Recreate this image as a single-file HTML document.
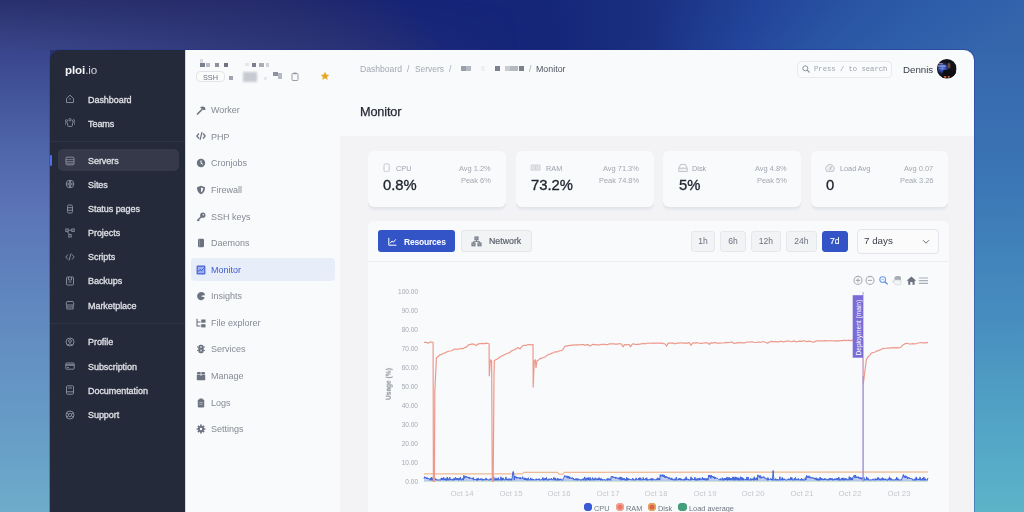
<!DOCTYPE html>
<html><head><meta charset="utf-8">
<style>
*{box-sizing:border-box;margin:0;padding:0}
html,body{width:1024px;height:512px;overflow:hidden}
body{position:relative;font-family:"Liberation Sans",sans-serif;background:#3a5a9e}
.a{position:absolute}
.t{position:absolute;white-space:nowrap;line-height:1}
.bg{position:absolute;left:0;top:0;width:1024px;height:512px;background:conic-gradient(from 270deg at 620px 250px, #2b316f 0deg, #2b316f 19.9deg, #282d6c 28.2deg, #252b6c 35.1deg, #1e2870 42.0deg, #162477 49.8deg, #152679 72.7deg, #1a3080 97.6deg, #22449a 120.0deg, #2a56a5 135.6deg, #3060aa 145.7deg, #3565ab 150.9deg, #3565ab 360deg);}
.bgtl{position:absolute;left:0;top:0;width:520px;height:50px;background:linear-gradient(to bottom, rgba(72,92,165,0) 0px, rgba(72,92,165,0.5) 50px);-webkit-mask-image:linear-gradient(90deg,#000 0%,rgba(0,0,0,0.6) 40%,rgba(0,0,0,0) 100%)}
.bgl{position:absolute;left:0;top:50px;width:50px;height:462px;background:linear-gradient(to bottom,#39458d 0px,#4f66aa 100px,#5a72b5 150px,#6189c0 260px,#68a0c7 400px,#6eaccb 462px)}
.bgr{position:absolute;left:974px;top:50px;width:50px;height:462px;background:linear-gradient(to bottom,#3667ad 0px,#3b76b6 130px,#4890c0 280px,#55a9c7 400px,#5cb4c9 462px)}
.side1{left:50px;top:50px;width:135px;height:470px;background:#252a3a;border-top-left-radius:10px}
.nav{position:absolute;left:87.7px;font-size:9px;font-weight:normal;-webkit-text-stroke:0.3px #dfe1e6;color:#dfe1e6;letter-spacing:-0.05px;white-space:nowrap;line-height:1}
.ico{position:absolute;left:64px;width:12px;height:12px}
.side2{left:185px;top:50px;width:156px;height:470px;background:#f9fafb;border-right:1px solid #ededf0;border-left:1px solid #d5d7dc}
.nav2{position:absolute;left:210.8px;font-size:9px;color:#7c818b;white-space:nowrap;line-height:1}
.ico2{position:absolute;left:195px;width:11px;height:11px}
.hdr{left:340px;top:50px;width:634px;height:86px;background:#f9fafb;border-top-right-radius:10px}
.content{left:340px;top:136px;width:634px;height:376px;background:#f3f3f5}
.card{position:absolute;top:151px;height:56px;background:#f9fafb;border-radius:6px;box-shadow:0 1.5px 0 #e4e5e9, 0 3.5px 0 #e9ebf2}
.clab{position:absolute;font-size:7.3px;color:#9ca3af;white-space:nowrap;line-height:1}
.cval{position:absolute;font-size:14.5px;color:#1f2430;white-space:nowrap;line-height:1;-webkit-text-stroke:0.35px #1f2430}
.cavg{position:absolute;font-size:7.1px;color:#a3a8b2;white-space:nowrap;line-height:1;text-align:right}
.panel{left:368px;top:221px;width:580.5px;height:300px;background:#f9fafb;border-radius:6px}
.tbtn{position:absolute;top:230.7px;height:20.8px;background:#f2f3f5;border:1px solid #e6e7eb;border-radius:3px;font-size:8.5px;color:#6b7280;text-align:center;line-height:19px}
.ylab{position:absolute;font-size:6.5px;color:#a3a8b2;white-space:nowrap;line-height:1;text-align:right;width:30px}
.xlab{position:absolute;font-size:7.8px;color:#c4c7cd;white-space:nowrap;line-height:1}
.leg{position:absolute;font-size:7.4px;color:#707683;white-space:nowrap;line-height:1}
.dot{position:absolute;width:7.5px;height:7.5px;border-radius:50%}
.t,.nav,.nav2,.clab,.cval,.cavg,.tbtn,.ylab,.xlab,.leg{will-change:transform}
</style></head><body>
<div class="bg"></div>
<div class="bgtl"></div>
<div class="bgl"></div>
<div class="bgr"></div>

<div class="a" style="left:49px;top:49px;width:926px;height:480px;border-radius:11px 11px 0 0;background:rgba(32,44,150,0.35)"></div>
<!-- dark sidebar -->
<div class="a side1"></div>
<div class="a" style="left:50px;top:140.5px;width:135px;height:1px;background:#2e3345"></div>
<div class="a" style="left:50px;top:322.5px;width:135px;height:1px;background:#2e3345"></div>
<div class="t" style="left:64.8px;top:64.2px;font-size:11.6px;font-weight:bold;color:#f4f5f7;letter-spacing:-0.1px">ploi<span style="font-weight:normal;color:#d2d4da">.io</span></div>
<div class="a" style="left:57.5px;top:149.2px;width:121px;height:22px;background:#353949;border-radius:5px"></div>
<div class="a" style="left:50px;top:154.5px;width:1.7px;height:11px;background:#4d70e0;border-radius:1px"></div>
<div class="nav" style="top:95.68px">Dashboard</div>
<svg class="a" style="left:65px;top:94.20px" width="10" height="10" viewBox="0 0 10 10" ><path d="M1.5,4.5 L5,1.2 L8.5,4.5 L8.5,8.5 L1.5,8.5 Z" fill="none" stroke="#858a97" stroke-width="1"/><circle cx="5" cy="5" r="0.8" fill="#858a97"/></svg>
<div class="nav" style="top:119.68px">Teams</div>
<svg class="a" style="left:65px;top:118.20px" width="10" height="10" viewBox="0 0 10 10" ><circle cx="1.4" cy="2.8" r="1.1" fill="none" stroke="#858a97" stroke-width="1"/><circle cx="5" cy="1.8" r="1.2" fill="none" stroke="#858a97" stroke-width="1"/><circle cx="8.6" cy="2.8" r="1.1" fill="none" stroke="#858a97" stroke-width="1"/><path d="M2.6,4.6 V7.5 Q2.6,8.4 3.4,8.4 H6.6 Q7.4,8.4 7.4,7.5 V4.6 M0.4,6.6 V5.2 Q0.6,4.4 1.6,4.4 M9.6,6.6 V5.2 Q9.4,4.4 8.4,4.4" fill="none" stroke="#858a97" stroke-width="1"/></svg>
<div class="nav" style="top:156.98px">Servers</div>
<svg class="a" style="left:65px;top:155.50px" width="10" height="10" viewBox="0 0 10 10" ><rect x="1" y="1.2" width="8" height="7.6" rx="1" fill="none" stroke="#858a97" stroke-width="1"/><path d="M1,3.6 H9 M1,5.6 H9 M1,7.2 H9" stroke="#858a97" stroke-width="0.8"/></svg>
<div class="nav" style="top:180.68px">Sites</div>
<svg class="a" style="left:65px;top:179.20px" width="10" height="10" viewBox="0 0 10 10" ><circle cx="5" cy="5" r="3.8" fill="none" stroke="#858a97" stroke-width="1"/><path d="M1.2,5 H8.8 M5,1.2 Q2.8,5 5,8.8 Q7.2,5 5,1.2" fill="none" stroke="#858a97" stroke-width="1"/></svg>
<div class="nav" style="top:204.98px">Status pages</div>
<svg class="a" style="left:65px;top:203.50px" width="10" height="10" viewBox="0 0 10 10" ><rect x="2.5" y="1" width="5" height="8" rx="1.5" fill="none" stroke="#858a97" stroke-width="1"/><path d="M2.5,3.7 H7.5 M2.5,6.3 H7.5" fill="none" stroke="#858a97" stroke-width="1"/></svg>
<div class="nav" style="top:229.28px">Projects</div>
<svg class="a" style="left:65px;top:227.80px" width="10" height="10" viewBox="0 0 10 10" ><rect x="0.8" y="1" width="2.4" height="2.4" fill="none" stroke="#858a97" stroke-width="1"/><rect x="6.8" y="1" width="2.4" height="2.4" fill="none" stroke="#858a97" stroke-width="1"/><rect x="3.8" y="6.6" width="2.4" height="2.4" fill="none" stroke="#858a97" stroke-width="1"/><path d="M3.2,2.2 H6.8 M2,3.4 L4.5,6.6" fill="none" stroke="#858a97" stroke-width="1"/></svg>
<div class="nav" style="top:253.48px">Scripts</div>
<svg class="a" style="left:65px;top:252.00px" width="10" height="10" viewBox="0 0 10 10" ><path d="M3,2.5 L0.8,5 L3,7.5 M7,2.5 L9.2,5 L7,7.5 M6,1.5 L4,8.5" fill="none" stroke="#858a97" stroke-width="1"/></svg>
<div class="nav" style="top:277.48px">Backups</div>
<svg class="a" style="left:65px;top:276.00px" width="10" height="10" viewBox="0 0 10 10" ><rect x="1.5" y="1" width="7" height="8" rx="1" fill="none" stroke="#858a97" stroke-width="1"/><path d="M3.5,1 V4 H6.5 V1 M3.5,6 H6.5" fill="none" stroke="#858a97" stroke-width="1"/></svg>
<div class="nav" style="top:301.68px">Marketplace</div>
<svg class="a" style="left:65px;top:300.20px" width="10" height="10" viewBox="0 0 10 10" ><path d="M1,4 L2,1.5 H8 L9,4 Q9,5 8,5 H2 Q1,5 1,4 Z M1.8,5 V9 H8.2 V5 M1.8,7 H8.2" fill="none" stroke="#858a97" stroke-width="1"/></svg>
<div class="nav" style="top:338.48px">Profile</div>
<svg class="a" style="left:65px;top:337.00px" width="10" height="10" viewBox="0 0 10 10" ><circle cx="5" cy="5" r="4" fill="none" stroke="#858a97" stroke-width="1"/><circle cx="5" cy="4" r="1.4" fill="none" stroke="#858a97" stroke-width="1"/><path d="M2.5,8 Q5,5.5 7.5,8" fill="none" stroke="#858a97" stroke-width="1"/></svg>
<div class="nav" style="top:362.68px">Subscription</div>
<svg class="a" style="left:65px;top:361.20px" width="10" height="10" viewBox="0 0 10 10" ><rect x="0.8" y="2" width="8.4" height="6.2" rx="0.8" fill="none" stroke="#858a97" stroke-width="1"/><path d="M0.8,4 H9.2" stroke="#858a97" stroke-width="1.6"/><path d="M2,6.6 H4" fill="none" stroke="#858a97" stroke-width="1"/></svg>
<div class="nav" style="top:386.78px">Documentation</div>
<svg class="a" style="left:65px;top:385.30px" width="10" height="10" viewBox="0 0 10 10" ><rect x="1.5" y="0.8" width="7" height="8.4" rx="1" fill="none" stroke="#858a97" stroke-width="1"/><path d="M3,3 H7 M1.5,6.8 H8.5" fill="none" stroke="#858a97" stroke-width="1"/></svg>
<div class="nav" style="top:411.18px">Support</div>
<svg class="a" style="left:65px;top:409.70px" width="10" height="10" viewBox="0 0 10 10" ><circle cx="5" cy="5" r="4" fill="none" stroke="#858a97" stroke-width="1"/><circle cx="5" cy="5" r="1.6" fill="none" stroke="#858a97" stroke-width="1"/><path d="M1.6,3 L3.6,4.2 M8.4,3 L6.4,4.2 M1.6,7 L3.6,5.8 M8.4,7 L6.4,5.8" fill="none" stroke="#858a97" stroke-width="1"/></svg>
<!-- second sidebar -->
<div class="a side2"></div>
<div class="a" style="left:200px;top:59px;width:3px;height:5px;background:#d8dbe0;filter:blur(0.7px)"></div>
<div class="a" style="left:200px;top:63px;width:5px;height:4px;background:#7b8090;filter:blur(0.6px)"></div>
<div class="a" style="left:206px;top:63px;width:4px;height:4px;background:#b9bdc6;filter:blur(0.6px)"></div>
<div class="a" style="left:215px;top:63px;width:4px;height:4px;background:#8c909c;filter:blur(0.6px)"></div>
<div class="a" style="left:224px;top:63px;width:4px;height:4px;background:#6f7480;filter:blur(0.6px)"></div>
<div class="a" style="left:245px;top:63px;width:4px;height:3px;background:#e4e6ea;filter:blur(0.6px)"></div>
<div class="a" style="left:252px;top:63px;width:4px;height:4px;background:#7b8090;filter:blur(0.6px)"></div>
<div class="a" style="left:259px;top:63px;width:5px;height:4px;background:#a8adb8;filter:blur(0.6px)"></div>
<div class="a" style="left:266px;top:63px;width:3px;height:4px;background:#d0d3da;filter:blur(0.6px)"></div>
<div class="a" style="left:195.5px;top:70.5px;width:29px;height:11.5px;border:1px solid #e3e5ea;border-radius:4px;background:#fbfbfc"></div>
<div class="t" style="left:203px;top:73.53px;font-size:7.3px;color:#6b7280">SSH</div>
<div class="a" style="left:229px;top:76px;width:4px;height:4px;background:#a0a4ae;filter:blur(0.6px)"></div>
<div class="a" style="left:243px;top:71.5px;width:14px;height:10px;background:#c7cad1;filter:blur(1.0px)"></div>
<div class="a" style="left:264px;top:76.5px;width:3px;height:3px;background:#e6e8ec;filter:blur(0.6px)"></div>
<div class="a" style="left:273px;top:71.5px;width:5px;height:4px;background:#8e93a0;filter:blur(0.6px)"></div>
<div class="a" style="left:278px;top:73px;width:4px;height:6px;background:#b6bac3;filter:blur(0.6px)"></div>
<svg class="a" style="left:290.5px;top:72.00px" width="8" height="9" viewBox="0 0 8 9" ><rect x="1" y="1.5" width="6" height="7" rx="1" fill="none" stroke="#8e93a0" stroke-width="0.9"/><rect x="2.5" y="0.6" width="3" height="1.6" fill="#8e93a0"/></svg>
<svg class="a" style="left:320px;top:71.00px" width="10" height="10" viewBox="0 0 10 10" ><path d="M5,0.8 L6.3,3.6 L9.3,3.9 L7,5.9 L7.7,8.9 L5,7.3 L2.3,8.9 L3,5.9 L0.7,3.9 L3.7,3.6 Z" fill="#e6a727"/></svg>
<div class="a" style="left:190.5px;top:257.5px;width:144px;height:23.8px;background:#e8edfa;border-radius:4px"></div>
<div class="nav2" style="top:106.48px;color:#858a94">Worker</div>
<svg class="a" style="left:195.5px;top:105.00px" width="10" height="10" viewBox="0 0 10 10" ><path d="M1.5,9 L6,4.5" stroke="#6b7280" stroke-width="1.6" stroke-linecap="round"/><path d="M4,2.5 Q6.5,0.5 9,2.5 L9.5,5 L7.5,5 Z" fill="#6b7280"/></svg>
<div class="nav2" style="top:132.78px;color:#858a94">PHP</div>
<svg class="a" style="left:195.5px;top:131.30px" width="10" height="10" viewBox="0 0 10 10" ><path d="M3,2.5 L0.8,5 L3,7.5 M7,2.5 L9.2,5 L7,7.5 M6,1.2 L4,8.8" fill="none" stroke="#6b7280" stroke-width="1.2"/></svg>
<div class="nav2" style="top:159.48px;color:#858a94">Cronjobs</div>
<svg class="a" style="left:195.5px;top:158.00px" width="10" height="10" viewBox="0 0 10 10" ><circle cx="5" cy="5" r="4.2" fill="#6b7280"/><path d="M5,2.5 V5.2 L6.8,6.4" fill="none" stroke="#f9fafb" stroke-width="1"/></svg>
<div class="nav2" style="top:186.48px;color:#858a94">Firewall</div>
<svg class="a" style="left:195.5px;top:185.00px" width="10" height="10" viewBox="0 0 10 10" ><path d="M5,0.8 L9,2.2 Q9,7.5 5,9.3 Q1,7.5 1,2.2 Z" fill="#6b7280"/><path d="M5,2.5 L7.2,3.2 Q7,6.5 5,7.6 Z" fill="#f9fafb"/></svg>
<div class="nav2" style="top:212.98px;color:#858a94">SSH keys</div>
<svg class="a" style="left:195.5px;top:211.50px" width="10" height="10" viewBox="0 0 10 10" ><circle cx="6.8" cy="3.2" r="2.6" fill="#6b7280"/><path d="M5.5,4.5 L1.2,8.8 M2.2,7.8 L3.2,8.8" stroke="#6b7280" stroke-width="1.5"/><circle cx="7.3" cy="2.7" r="0.7" fill="#f9fafb"/></svg>
<div class="nav2" style="top:239.48px;color:#858a94">Daemons</div>
<svg class="a" style="left:195.5px;top:238.00px" width="10" height="10" viewBox="0 0 10 10" ><rect x="2" y="0.8" width="6" height="8.4" rx="1.3" fill="#6b7280"/><path d="M3.5,0.8 V9.2" stroke="#9aa0ab" stroke-width="0.6"/></svg>
<div class="nav2" style="top:265.98px;color:#3d5bd0">Monitor</div>
<svg class="a" style="left:195.5px;top:264.50px" width="10" height="10" viewBox="0 0 10 10" ><rect x="0.6" y="0.6" width="8.8" height="8.8" rx="1.2" fill="#4a64d8"/><rect x="1.8" y="1.8" width="6.4" height="6.4" fill="#9fb0ef"/><path d="M2.4,6.6 L4,4.6 L5.5,5.8 L7.6,3.4" fill="none" stroke="#3a55cf" stroke-width="1"/></svg>
<div class="nav2" style="top:292.48px;color:#858a94">Insights</div>
<svg class="a" style="left:195.5px;top:291.00px" width="10" height="10" viewBox="0 0 10 10" ><path d="M8.6,3.2 A4,4 0 1,0 8.8,6.6 L5,5.2 Z" fill="#6b7280"/><path d="M6,1 A4,4 0 0,1 9.2,4.2 L6,4.2 Z" fill="#6b7280"/></svg>
<div class="nav2" style="top:318.98px;color:#858a94">File explorer</div>
<svg class="a" style="left:195.5px;top:317.50px" width="10" height="10" viewBox="0 0 10 10" ><path d="M1,0.8 V8 H4.5 M1,4 H4.5" fill="none" stroke="#6b7280" stroke-width="1.1"/><rect x="5.2" y="1.5" width="4.3" height="3.2" fill="#6b7280"/><rect x="5.2" y="6.2" width="4.3" height="3.2" fill="#6b7280"/></svg>
<div class="nav2" style="top:345.48px;color:#858a94">Services</div>
<svg class="a" style="left:195.5px;top:344.00px" width="10" height="10" viewBox="0 0 10 10" ><rect x="2.3" y="0.8" width="5.4" height="8.4" rx="2.2" fill="#6b7280"/><path d="M1,3 H2.5 M7.5,3 H9 M1,6.5 H2.5 M7.5,6.5 H9" stroke="#6b7280" stroke-width="1"/><circle cx="5" cy="3" r="0.9" fill="#cfd2d8"/><circle cx="5" cy="6.5" r="0.9" fill="#cfd2d8"/></svg>
<div class="nav2" style="top:372.48px;color:#858a94">Manage</div>
<svg class="a" style="left:195.5px;top:371.00px" width="10" height="10" viewBox="0 0 10 10" ><rect x="0.8" y="3.5" width="8.4" height="5.7" rx="0.6" fill="#6b7280"/><path d="M1.5,1 H8.5 L9.2,3 H0.8 Z" fill="#6b7280"/><path d="M5,1 V5" stroke="#f9fafb" stroke-width="0.7"/></svg>
<div class="nav2" style="top:398.98px;color:#858a94">Logs</div>
<svg class="a" style="left:195.5px;top:397.50px" width="10" height="10" viewBox="0 0 10 10" ><rect x="1.8" y="1.5" width="6.4" height="8" rx="1" fill="#6b7280"/><rect x="3.3" y="0.6" width="3.4" height="1.8" rx="0.5" fill="#6b7280"/><path d="M3.3,4.5 H6.7 M3.3,6.3 H6.7" stroke="#cfd2d8" stroke-width="0.6"/></svg>
<div class="nav2" style="top:425.48px;color:#858a94">Settings</div>
<svg class="a" style="left:195.5px;top:424.00px" width="10" height="10" viewBox="0 0 10 10" ><circle cx="5" cy="5" r="3" fill="#6b7280"/><path d="M5,0.6 V9.4 M0.6,5 H9.4 M1.9,1.9 L8.1,8.1 M8.1,1.9 L1.9,8.1" stroke="#6b7280" stroke-width="1.7"/><circle cx="5" cy="5" r="1.2" fill="#f9fafb"/></svg>
<!-- header -->
<div class="a hdr"></div>
<div class="a content"></div>
<div class="t" style="left:359.7px;top:65.48px;font-size:8.6px;color:#a3a8b2">Dashboard</div>
<div class="t" style="left:407.3px;top:65.48px;font-size:8.6px;color:#a3a8b2">/</div>
<div class="t" style="left:414.7px;top:65.28px;font-size:8.4px;color:#a3a8b2">Servers</div>
<div class="t" style="left:448.8px;top:65.48px;font-size:8.6px;color:#a3a8b2">/</div>
<div class="a" style="left:461px;top:66px;width:5px;height:5px;background:#9aa0ab;filter:blur(0.7px)"></div>
<div class="a" style="left:466px;top:66px;width:5px;height:5px;background:#b4b8c1;filter:blur(0.7px)"></div>
<div class="a" style="left:481px;top:66px;width:4px;height:5px;background:#eef0f2;filter:blur(0.7px)"></div>
<div class="a" style="left:495px;top:66px;width:5px;height:5px;background:#7d8290;filter:blur(0.5px)"></div>
<div class="a" style="left:505px;top:66px;width:5px;height:5px;background:#c9ccd3;filter:blur(0.7px)"></div>
<div class="a" style="left:510px;top:66px;width:8px;height:5px;background:#b5b9c2;filter:blur(0.7px)"></div>
<div class="a" style="left:519px;top:66px;width:5px;height:5px;background:#7b808e;filter:blur(0.5px)"></div>
<div class="t" style="left:528.6px;top:65.48px;font-size:8.6px;color:#a3a8b2">/</div>
<div class="t" style="left:535.5px;top:65.35px;font-size:8.85px;color:#4f5562">Monitor</div>
<div class="t" style="left:360px;top:106.42px;font-size:12.7px;color:#262a35;letter-spacing:-0.15px;-webkit-text-stroke:0.25px #262a35">Monitor</div>
<div class="a" style="left:797.2px;top:60.5px;width:95.3px;height:17.5px;border:1px solid #e8eaee;border-radius:4px;background:#fafbfc"></div>
<svg class="a" style="left:801.5px;top:65.00px" width="8" height="8" viewBox="0 0 8 8" ><circle cx="3.3" cy="3.3" r="2.5" fill="none" stroke="#8e93a0" stroke-width="1"/><path d="M5.2,5.2 L7.5,7.5" stroke="#8e93a0" stroke-width="1.1"/></svg>
<div class="t" style="left:813.6px;top:66.38px;font-size:7.2px;font-family:'Liberation Mono',monospace;color:#9ca3af">Press / to search</div>
<div class="t" style="left:902.8px;top:65.33px;font-size:9.7px;color:#3b404c">Dennis</div>
<svg class="a" style="left:937.3px;top:59.1px" width="19.6" height="19.6" viewBox="0 0 20 20"><defs><clipPath id="av"><circle cx="10" cy="10" r="10"/></clipPath><radialGradient id="avg" cx="0.3" cy="0.48" r="0.36"><stop offset="0" stop-color="#5a7ce8"/><stop offset="0.55" stop-color="#2a3f98"/><stop offset="1" stop-color="#121420" stop-opacity="0"/></radialGradient></defs><g clip-path="url(#av)"><rect width="20" height="20" fill="#121218"/><rect width="20" height="20" fill="url(#avg)"/><rect x="1" y="6.5" width="8" height="1.3" fill="#c8d4ff" opacity="0.7"/><rect x="2" y="4" width="4" height="1.5" fill="#b0c0f5" opacity="0.6"/><rect x="1.5" y="9" width="5" height="1" fill="#a8b8f0" opacity="0.5"/><ellipse cx="12.2" cy="6.8" rx="1.6" ry="3" fill="#6e4a3c"/><path d="M6,12 Q8,10.5 12,11 Q17,11 19,13 L20,20 L5,20 Z" fill="#0e0e12"/><rect x="7" y="17.5" width="2.5" height="1.5" fill="#e07040"/><rect x="11" y="17.5" width="2" height="1.5" fill="#e07040"/></g></svg>
<div class="card" style="left:367.6px;width:138.3px"></div>
<svg class="a" style="left:383.1px;top:162.85px" width="7" height="9.5" viewBox="0 0 7 9.5" ><rect x="1" y="0.8" width="5.2" height="8" rx="1.6" fill="none" stroke="#c3c6cd" stroke-width="1"/></svg>
<div class="clab" style="left:396.0px;top:165.03px;font-size:7.3px;">CPU</div>
<div class="cval" style="left:383.3px;top:178.06px;font-size:14.8px;">0.8%</div>
<div class="cavg" style="right:533.00px;top:165.26px;font-size:7.45px;">Avg 1.2%</div>
<div class="cavg" style="right:533.00px;top:176.56px;font-size:7.45px;">Peak 6%</div>
<div class="card" style="left:515.6px;width:138.3px"></div>
<svg class="a" style="left:530.1px;top:162.85px" width="11" height="9.5" viewBox="0 0 11 9.5" ><rect x="0.5" y="1.6" width="10" height="6.2" rx="0.8" fill="#d6d9de"/><rect x="2" y="3.2" width="7" height="3" fill="#eceef1"/><path d="M3.8,3.4 V6 M5.5,3.4 V6 M7.2,3.4 V6" stroke="#bfc3ca" stroke-width="0.7"/></svg>
<div class="clab" style="left:545.7px;top:165.03px;font-size:7.3px;">RAM</div>
<div class="cval" style="left:531.3000000000001px;top:178.06px;font-size:14.8px;">73.2%</div>
<div class="cavg" style="right:385.00px;top:165.26px;font-size:7.45px;">Avg 71.3%</div>
<div class="cavg" style="right:385.00px;top:176.56px;font-size:7.45px;">Peak 74.8%</div>
<div class="card" style="left:663px;width:138.3px"></div>
<svg class="a" style="left:677.5px;top:162.85px" width="10" height="9.5" viewBox="0 0 10 9.5" ><path d="M0.8,5.2 L2.6,1.4 H7.4 L9.2,5.2 V8.6 H0.8 Z" fill="none" stroke="#bcc0c7" stroke-width="1"/><path d="M0.8,5.2 H9.2" stroke="#bcc0c7" stroke-width="1"/><path d="M2.2,6.9 H5 M6.5,6.9 H7.8" stroke="#d5d8dd" stroke-width="0.8"/></svg>
<div class="clab" style="left:692.2px;top:165.03px;font-size:7.3px;">Disk</div>
<div class="cval" style="left:678.7px;top:178.06px;font-size:14.8px;">5%</div>
<div class="cavg" style="right:237.60px;top:165.26px;font-size:7.45px;">Avg 4.8%</div>
<div class="cavg" style="right:237.60px;top:176.56px;font-size:7.45px;">Peak 5%</div>
<div class="card" style="left:810.6px;width:137.7px"></div>
<svg class="a" style="left:825.0px;top:162.85px" width="10" height="9.5" viewBox="0 0 10 9.5" ><path d="M1.6,8.4 A4.3,4.3 0 1,1 8.4,8.4 Z" fill="#eceef1" stroke="#c3c6cd" stroke-width="1"/><path d="M4.8,6.8 L6.4,3.4" stroke="#9aa0a9" stroke-width="0.8"/></svg>
<div class="clab" style="left:839.7px;top:165.03px;font-size:7.3px;">Load Avg</div>
<div class="cval" style="left:826.3000000000001px;top:178.06px;font-size:14.8px;">0</div>
<div class="cavg" style="right:90.40px;top:165.26px;font-size:7.45px;">Avg 0.07</div>
<div class="cavg" style="right:90.40px;top:176.56px;font-size:7.45px;">Peak 3.26</div>
<div class="a panel"></div>
<div class="a" style="left:377.7px;top:229.8px;width:77.8px;height:22.5px;background:#3254c6;border-radius:3px"></div>
<svg class="a" style="left:388px;top:236.50px" width="9" height="9" viewBox="0 0 9 9" ><path d="M0.8,0.8 V8.2 H8.5" fill="none" stroke="#fff" stroke-width="1"/><path d="M2.2,6.2 L4,4 L5.5,5.2 L7.8,2.3" fill="none" stroke="#fff" stroke-width="1"/></svg>
<div class="t" style="left:404px;top:237.73px;font-size:8.5px;color:#fff;font-weight:bold;letter-spacing:-0.2px">Resources</div>
<div class="a" style="left:460.8px;top:229.8px;width:71.5px;height:22.5px;background:#f2f3f5;border:1px solid #e4e6ea;border-radius:3px"></div>
<svg class="a" style="left:470.5px;top:235.50px" width="11" height="11" viewBox="0 0 11 11" ><rect x="3.9" y="0.9" width="3.2" height="3" fill="#9a9fa8" stroke="#6b7280" stroke-width="0.8"/><rect x="0.9" y="6.9" width="3.2" height="3" fill="#9a9fa8" stroke="#6b7280" stroke-width="0.8"/><rect x="6.9" y="6.9" width="3.2" height="3" fill="#9a9fa8" stroke="#6b7280" stroke-width="0.8"/><path d="M5.5,3.9 V5.5 M2.5,6.9 V5.5 H8.5 V6.9" fill="none" stroke="#6b7280" stroke-width="0.8"/></svg>
<div class="t" style="left:488.9px;top:236.88px;font-size:8.8px;color:#5b616d;-webkit-text-stroke:0.2px #5b616d">Network</div>
<div class="tbtn" style="left:690.8px;width:24.0px">1h</div>
<div class="tbtn" style="left:720px;width:26.2px">6h</div>
<div class="tbtn" style="left:750.9px;width:29.8px">12h</div>
<div class="tbtn" style="left:786px;width:30.8px">24h</div>
<div class="tbtn" style="left:821.6px;width:25.5px;background:#3254c6;border-color:#3254c6;color:#fff;-webkit-text-stroke:0.2px #fff">7d</div>
<div class="a" style="left:856.9px;top:228.5px;width:82px;height:25px;background:#fbfbfc;border:1px solid #e3e5ea;border-radius:4px"></div>
<div class="t" style="left:864.3px;top:236.48px;font-size:9.8px;color:#3b404c">7 days</div>
<svg class="a" style="left:922px;top:238.80px" width="8" height="6" viewBox="0 0 8 6" ><path d="M1,1.2 L4,4.2 L7,1.2" fill="none" stroke="#6b7280" stroke-width="1"/></svg>
<div class="a" style="left:368px;top:261px;width:580.5px;height:1px;background:#eceef1"></div>
<svg class="a" style="left:0;top:0" width="1024" height="512" viewBox="0 0 1024 512">
<path d="M424,481.50 H928" stroke="#eef0f3" stroke-width="0.7" stroke-dasharray="0.7 3.5"/>
<path d="M424,462.52 H928" stroke="#eef0f3" stroke-width="0.7" stroke-dasharray="0.7 3.5"/>
<path d="M424,443.55 H928" stroke="#eef0f3" stroke-width="0.7" stroke-dasharray="0.7 3.5"/>
<path d="M424,424.57 H928" stroke="#eef0f3" stroke-width="0.7" stroke-dasharray="0.7 3.5"/>
<path d="M424,405.60 H928" stroke="#eef0f3" stroke-width="0.7" stroke-dasharray="0.7 3.5"/>
<path d="M424,386.62 H928" stroke="#eef0f3" stroke-width="0.7" stroke-dasharray="0.7 3.5"/>
<path d="M424,367.65 H928" stroke="#eef0f3" stroke-width="0.7" stroke-dasharray="0.7 3.5"/>
<path d="M424,348.68 H928" stroke="#eef0f3" stroke-width="0.7" stroke-dasharray="0.7 3.5"/>
<path d="M424,329.70 H928" stroke="#eef0f3" stroke-width="0.7" stroke-dasharray="0.7 3.5"/>
<path d="M424,310.73 H928" stroke="#eef0f3" stroke-width="0.7" stroke-dasharray="0.7 3.5"/>
<path d="M424,291.75 H928" stroke="#eef0f3" stroke-width="0.7" stroke-dasharray="0.7 3.5"/>
<path d="M462,291.75 V481.5" stroke="#f0f1f4" stroke-width="0.6" stroke-dasharray="0.6 4"/>
<path d="M510.5,291.75 V481.5" stroke="#f0f1f4" stroke-width="0.6" stroke-dasharray="0.6 4"/>
<path d="M559,291.75 V481.5" stroke="#f0f1f4" stroke-width="0.6" stroke-dasharray="0.6 4"/>
<path d="M607.5,291.75 V481.5" stroke="#f0f1f4" stroke-width="0.6" stroke-dasharray="0.6 4"/>
<path d="M656,291.75 V481.5" stroke="#f0f1f4" stroke-width="0.6" stroke-dasharray="0.6 4"/>
<path d="M704.5,291.75 V481.5" stroke="#f0f1f4" stroke-width="0.6" stroke-dasharray="0.6 4"/>
<path d="M753,291.75 V481.5" stroke="#f0f1f4" stroke-width="0.6" stroke-dasharray="0.6 4"/>
<path d="M801.5,291.75 V481.5" stroke="#f0f1f4" stroke-width="0.6" stroke-dasharray="0.6 4"/>
<path d="M850,291.75 V481.5" stroke="#f0f1f4" stroke-width="0.6" stroke-dasharray="0.6 4"/>
<path d="M898.5,291.75 V481.5" stroke="#f0f1f4" stroke-width="0.6" stroke-dasharray="0.6 4"/>
<path d="M424.00,473.90 L522.80,473.90 L523.50,472.30 L557.80,472.30 L558.80,474.20 L563.00,474.20 L564.00,472.30 L928.00,472.00" fill="none" stroke="#ebaa78" stroke-width="1.0"/>
<path d="M424.00,481.30 L928.00,481.30" fill="none" stroke="#9ccdb3" stroke-width="0.6"/>
<path d="M424.00,478.79 L424.70,476.69 L425.49,478.15 L426.08,477.21 L426.59,478.81 L427.15,477.66 L427.61,479.06 L428.07,478.10 L428.54,478.96 L429.33,478.76 L430.05,480.26 L430.55,477.90 L431.28,480.27 L431.79,477.12 L432.48,480.36 L432.95,478.43 L433.43,479.93 L434.10,477.70 L434.85,480.37 L435.60,478.53 L436.24,479.94 L436.79,479.37 L437.32,480.35 L437.83,479.70 L438.39,480.25 L439.10,479.40 L439.62,480.23 L440.07,479.88 L440.78,480.12 L441.29,477.87 L441.78,479.99 L442.38,477.98 L442.97,480.15 L443.66,477.39 L444.40,480.05 L445.08,478.52 L445.54,480.34 L446.02,478.62 L446.53,480.36 L447.27,477.00 L447.82,480.28 L448.37,478.73 L448.98,480.27 L449.76,477.14 L450.30,479.92 L450.86,478.90 L451.44,480.16 L452.07,479.40 L452.52,480.27 L453.00,478.85 L453.46,480.25 L453.99,478.32 L454.70,480.07 L455.40,477.33 L455.97,479.91 L456.47,478.19 L456.94,479.98 L457.70,478.09 L458.43,480.33 L459.07,477.98 L459.80,479.99 L460.45,476.98 L461.14,480.29 L461.61,479.54 L462.09,479.98 L462.74,478.21 L463.43,480.16 L463.88,475.27 L464.51,478.33 L465.22,476.05 L465.93,477.51 L466.72,476.27 L467.41,478.00 L468.08,476.97 L468.79,478.35 L469.25,476.95 L469.94,478.87 L470.57,477.87 L471.33,478.51 L472.11,477.88 L472.90,479.39 L473.42,477.55 L473.92,480.14 L474.71,479.08 L475.33,479.96 L476.03,479.00 L476.65,480.39 L477.10,478.40 L477.66,480.33 L478.23,477.98 L478.68,480.02 L479.42,478.97 L480.12,479.95 L480.67,478.47 L481.47,480.11 L482.05,478.60 L482.52,480.35 L483.26,478.96 L483.80,480.27 L484.42,479.53 L485.21,479.96 L485.94,477.90 L486.72,480.13 L487.42,479.17 L488.03,480.02 L488.71,479.85 L489.48,480.34 L490.10,478.57 L490.81,479.91 L491.35,478.57 L491.99,480.20 L492.50,479.69 L493.27,480.15 L493.79,476.60 L494.40,480.33 L494.92,479.56 L495.40,480.28 L495.94,477.92 L496.65,480.19 L497.25,478.49 L497.82,480.37 L498.36,477.65 L498.99,480.09 L499.74,479.63 L500.28,480.20 L500.89,476.78 L501.64,480.39 L502.10,477.91 L502.72,480.11 L503.17,477.88 L503.91,479.97 L504.70,479.79 L505.20,480.14 L505.89,476.93 L506.57,480.02 L507.18,478.86 L507.90,480.28 L508.67,478.57 L509.17,480.27 L509.84,478.78 L510.31,480.14 L510.97,478.65 L511.63,480.39 L512.18,477.85 L512.86,471.70 L513.48,471.70 L514.26,480.05 L514.82,475.87 L515.42,477.80 L516.19,476.66 L516.79,478.64 L517.52,477.15 L518.31,478.14 L518.84,477.42 L519.62,479.03 L520.15,477.24 L520.65,479.14 L521.44,478.28 L522.03,478.81 L522.74,476.68 L523.25,479.14 L523.71,478.48 L524.28,479.75 L524.83,477.85 L525.32,479.92 L525.84,478.00 L526.58,480.18 L527.05,478.49 L527.82,480.30 L528.40,477.76 L528.99,479.99 L529.71,479.87 L530.18,479.94 L530.72,477.91 L531.29,480.26 L532.07,478.61 L532.77,480.24 L533.32,479.14 L534.09,480.08 L534.87,479.67 L535.49,479.92 L536.27,478.62 L536.87,480.15 L537.65,479.10 L538.36,479.99 L539.08,478.54 L539.64,480.22 L540.36,479.70 L541.08,480.28 L541.55,479.35 L542.11,479.91 L542.87,477.48 L543.35,480.35 L543.97,478.41 L544.51,480.19 L545.17,478.08 L545.92,480.07 L546.41,477.45 L547.06,480.21 L547.77,479.65 L548.31,480.32 L549.06,478.54 L549.65,479.90 L550.28,479.09 L550.96,479.90 L551.45,478.00 L552.19,479.94 L552.65,479.78 L553.17,479.91 L553.82,477.35 L554.58,480.18 L555.12,477.86 L555.61,480.10 L556.27,479.53 L556.77,480.30 L557.31,478.18 L557.83,480.39 L558.40,478.70 L558.96,480.30 L559.68,478.83 L560.17,480.20 L560.81,478.80 L561.32,480.05 L561.91,479.59 L562.70,480.24 L563.35,478.44 L564.10,477.31 L564.62,475.52 L565.38,476.74 L565.97,475.76 L566.43,477.33 L567.20,475.92 L567.82,478.21 L568.46,476.26 L569.19,478.59 L569.68,476.63 L570.15,478.55 L570.92,477.54 L571.64,478.85 L572.39,477.58 L572.98,479.15 L573.47,478.00 L573.94,480.12 L574.65,479.06 L575.14,480.10 L575.79,478.56 L576.38,480.11 L576.98,478.41 L577.59,480.39 L578.25,478.64 L578.97,480.01 L579.58,479.43 L580.07,480.34 L580.67,479.46 L581.30,480.38 L581.97,479.17 L582.69,480.14 L583.16,478.48 L583.94,480.33 L584.69,476.92 L585.43,480.30 L586.22,477.85 L586.99,480.32 L587.72,477.72 L588.29,480.02 L588.80,477.47 L589.53,480.33 L590.16,477.55 L590.70,480.15 L591.26,479.72 L591.77,479.93 L592.46,477.60 L593.18,480.34 L593.82,478.50 L594.57,480.12 L595.22,477.67 L596.02,480.09 L596.61,478.61 L597.41,480.11 L597.98,478.41 L598.49,480.03 L598.96,477.50 L599.64,479.91 L600.29,478.56 L600.74,480.38 L601.24,478.42 L601.87,479.95 L602.37,479.25 L602.83,480.40 L603.40,479.54 L603.93,480.11 L604.59,479.28 L605.20,480.33 L605.98,479.75 L606.46,480.08 L607.22,478.46 L607.76,480.39 L608.44,478.51 L609.11,480.18 L609.89,478.63 L610.66,480.38 L611.29,476.27 L612.02,477.75 L612.79,476.02 L613.42,477.65 L613.93,477.01 L614.69,478.04 L615.15,476.91 L615.86,478.83 L616.34,477.41 L617.06,478.39 L617.75,477.75 L618.48,479.19 L619.16,477.54 L619.61,479.38 L620.32,476.90 L621.08,480.24 L621.61,477.04 L622.31,480.07 L623.10,477.98 L623.79,479.97 L624.40,478.27 L624.95,480.29 L625.62,478.99 L626.12,480.39 L626.61,477.39 L627.11,480.39 L627.57,478.20 L628.27,480.03 L628.74,478.50 L629.48,479.99 L630.24,479.03 L631.01,479.93 L631.50,479.79 L631.96,479.98 L632.69,477.99 L633.36,480.26 L633.85,479.14 L634.37,480.24 L634.97,479.64 L635.52,480.04 L636.10,477.84 L636.72,479.97 L637.39,479.49 L637.99,480.01 L638.56,478.31 L639.09,479.97 L639.57,477.60 L640.02,480.30 L640.74,477.79 L641.36,480.15 L642.09,479.41 L642.66,479.98 L643.20,477.46 L643.73,480.05 L644.35,479.26 L644.83,480.01 L645.52,478.21 L646.10,480.20 L646.69,477.70 L647.45,480.39 L647.97,479.00 L648.59,480.21 L649.35,479.44 L649.99,480.02 L650.70,478.52 L651.27,480.32 L652.01,478.08 L652.52,480.18 L653.24,478.76 L653.85,479.96 L654.39,479.60 L655.08,479.98 L655.59,479.65 L656.15,480.14 L656.66,478.69 L657.45,480.04 L657.93,477.68 L658.52,479.91 L659.25,478.42 L659.77,480.08 L660.25,474.58 L660.84,476.29 L661.47,474.86 L662.13,476.55 L662.90,474.47 L663.49,476.98 L664.25,474.96 L664.94,477.83 L665.50,476.12 L666.22,477.90 L666.76,476.44 L667.36,477.84 L667.87,477.17 L668.49,479.14 L669.13,477.28 L669.76,478.91 L670.40,478.34 L671.08,479.99 L671.71,477.86 L672.23,480.06 L672.82,478.77 L673.61,480.22 L674.08,479.50 L674.54,480.19 L675.14,478.51 L675.68,480.29 L676.39,477.17 L676.91,480.00 L677.50,479.77 L678.22,480.00 L678.90,478.28 L679.42,479.92 L680.00,478.00 L680.73,480.17 L681.29,478.76 L682.03,480.22 L682.78,479.52 L683.31,480.19 L683.83,479.18 L684.38,480.28 L684.93,478.43 L685.61,480.07 L686.18,476.77 L686.65,479.99 L687.42,478.75 L688.16,480.08 L688.62,478.95 L689.30,480.27 L689.78,479.67 L690.50,480.23 L691.01,476.85 L691.52,479.95 L692.18,478.16 L692.94,480.01 L693.69,479.21 L694.32,480.03 L694.92,477.13 L695.47,480.28 L695.97,478.84 L696.58,480.33 L697.20,478.31 L697.95,480.40 L698.70,478.28 L699.38,479.98 L699.96,477.84 L700.44,480.08 L701.11,479.29 L701.80,479.93 L702.37,477.19 L702.99,479.95 L703.45,478.21 L704.02,479.97 L704.59,478.32 L705.31,480.29 L705.92,478.29 L706.66,480.25 L707.39,478.35 L707.94,480.15 L708.73,475.07 L709.29,477.16 L709.96,474.93 L710.72,478.37 L711.28,475.18 L711.94,477.44 L712.71,476.12 L713.40,477.95 L713.93,476.44 L714.41,478.96 L715.14,477.01 L715.87,478.64 L716.41,477.78 L717.01,478.57 L717.48,478.29 L718.22,478.90 L718.82,479.51 L719.48,479.93 L720.27,478.45 L720.76,480.08 L721.28,479.88 L721.74,480.06 L722.23,477.69 L722.98,480.34 L723.44,478.63 L724.15,480.31 L724.61,478.12 L725.36,480.04 L725.84,478.12 L726.45,479.93 L726.99,476.94 L727.45,480.39 L728.12,477.70 L728.68,480.04 L729.19,477.22 L729.66,480.22 L730.31,478.16 L730.81,480.00 L731.39,478.21 L731.99,480.21 L732.71,476.86 L733.36,480.25 L733.83,476.96 L734.57,480.23 L735.23,476.80 L735.89,480.25 L736.49,477.35 L737.18,480.10 L737.95,477.46 L738.40,480.27 L739.00,478.00 L739.76,480.38 L740.50,476.76 L741.15,480.26 L741.90,476.98 L742.67,480.23 L743.15,478.02 L743.67,480.02 L744.44,479.29 L745.13,480.17 L745.65,479.15 L746.38,480.17 L746.86,476.87 L747.39,480.11 L748.15,477.17 L748.77,480.11 L749.29,479.72 L749.98,480.22 L750.63,478.33 L751.13,480.38 L751.93,478.78 L752.60,480.01 L753.11,478.52 L753.74,480.39 L754.20,476.76 L754.82,480.12 L755.36,478.43 L756.14,480.02 L756.88,477.50 L757.34,480.30 L757.86,474.75 L758.61,476.58 L759.38,475.55 L759.87,478.05 L760.52,475.61 L761.11,478.42 L761.90,476.87 L762.44,477.66 L763.20,476.53 L763.90,477.95 L764.37,476.86 L765.06,478.66 L765.77,477.95 L766.27,479.28 L766.80,478.46 L767.50,480.30 L767.96,477.54 L768.74,479.97 L769.50,479.45 L769.98,479.94 L770.73,478.40 L771.30,479.99 L771.92,478.74 L772.44,480.37 L773.14,470.50 L773.90,480.27 L774.49,479.63 L775.24,480.23 L775.74,478.55 L776.51,480.34 L777.30,479.00 L777.99,480.29 L778.60,479.64 L779.12,480.22 L779.92,476.69 L780.41,480.26 L781.17,479.17 L781.72,479.91 L782.18,477.39 L782.68,480.40 L783.42,478.70 L784.02,479.94 L784.55,478.75 L785.06,480.01 L785.76,479.82 L786.24,480.10 L786.86,479.69 L787.53,480.05 L788.26,478.68 L788.73,480.03 L789.33,478.84 L790.06,480.23 L790.81,477.21 L791.26,479.94 L791.88,477.48 L792.39,479.98 L792.97,479.53 L793.63,480.40 L794.26,478.33 L794.75,480.04 L795.49,477.41 L796.19,480.21 L796.90,479.03 L797.69,480.15 L798.31,478.31 L798.77,479.92 L799.30,479.80 L799.84,479.99 L800.30,479.20 L800.82,480.39 L801.48,478.32 L802.17,480.35 L802.93,478.85 L803.42,480.15 L804.05,479.78 L804.64,480.33 L805.29,477.62 L805.94,480.03 L806.45,475.47 L807.05,477.56 L807.64,475.93 L808.17,477.92 L808.97,475.78 L809.71,478.10 L810.50,476.77 L811.17,478.37 L811.64,477.53 L812.14,478.30 L812.92,477.19 L813.68,478.77 L814.22,477.93 L815.00,479.34 L815.63,477.85 L816.18,480.08 L816.68,477.85 L817.31,480.27 L817.92,478.74 L818.41,480.33 L818.97,478.58 L819.50,480.36 L820.14,477.07 L820.79,480.07 L821.31,478.39 L821.95,480.09 L822.57,478.63 L823.10,480.14 L823.68,478.89 L824.25,479.97 L824.79,478.36 L825.34,479.91 L825.89,478.73 L826.36,479.96 L826.97,479.51 L827.57,480.03 L828.06,478.94 L828.77,480.32 L829.34,478.16 L830.00,479.98 L830.74,478.09 L831.45,480.02 L832.07,478.12 L832.84,480.34 L833.59,479.13 L834.25,480.15 L835.03,478.44 L835.76,479.96 L836.42,478.40 L837.03,480.04 L837.58,478.29 L838.17,480.24 L838.89,477.20 L839.50,480.31 L840.05,479.32 L840.71,480.36 L841.48,477.97 L842.22,479.92 L842.74,477.90 L843.20,480.38 L843.85,477.89 L844.57,480.13 L845.37,478.33 L846.06,480.21 L846.63,478.51 L847.41,480.06 L848.05,479.53 L848.64,480.12 L849.29,476.64 L849.91,480.18 L850.58,477.39 L851.21,479.99 L851.72,477.82 L852.46,480.14 L852.95,476.97 L853.69,476.57 L854.28,475.17 L854.91,478.10 L855.58,475.00 L856.25,477.97 L856.98,476.78 L857.54,477.99 L858.22,476.59 L858.76,478.33 L859.56,477.49 L860.07,479.06 L860.55,477.24 L861.22,479.28 L861.67,477.77 L862.25,479.28 L862.73,477.10 L863.34,480.21 L863.81,477.10 L864.59,480.18 L865.26,479.86 L866.04,479.97 L866.60,476.82 L867.15,480.10 L867.94,477.86 L868.47,480.21 L869.17,479.59 L869.93,480.16 L870.66,479.73 L871.23,480.31 L872.02,479.34 L872.51,480.13 L873.10,478.83 L873.59,479.99 L874.17,479.71 L874.71,480.28 L875.18,478.52 L875.68,480.05 L876.16,479.06 L876.66,480.18 L877.40,477.61 L877.97,480.04 L878.56,477.55 L879.34,480.15 L879.87,478.76 L880.57,480.27 L881.33,478.50 L881.87,480.10 L882.39,477.65 L883.02,480.13 L883.57,478.48 L884.25,480.12 L884.80,478.81 L885.32,479.97 L885.88,478.78 L886.53,480.22 L887.15,479.83 L887.71,480.29 L888.20,478.59 L888.80,479.95 L889.52,476.77 L890.01,480.26 L890.47,478.17 L891.05,480.19 L891.73,478.63 L892.47,480.22 L893.14,479.78 L893.91,480.03 L894.61,479.86 L895.12,480.30 L895.67,478.86 L896.23,480.08 L896.75,477.12 L897.45,480.27 L898.05,478.52 L898.50,479.98 L899.22,479.86 L899.97,480.10 L900.44,479.79 L901.16,480.29 L901.93,478.81 L902.63,476.82 L903.37,474.56 L903.97,477.24 L904.67,475.76 L905.14,477.93 L905.77,475.79 L906.24,477.61 L906.78,476.33 L907.42,478.85 L908.00,477.12 L908.49,478.33 L909.03,477.36 L909.80,478.99 L910.56,478.00 L911.30,478.91 L911.81,478.24 L912.53,479.98 L913.02,479.54 L913.54,480.37 L914.09,479.20 L914.69,480.34 L915.26,478.50 L915.77,480.36 L916.22,476.90 L916.70,480.04 L917.49,478.78 L918.11,480.18 L918.63,478.89 L919.40,480.08 L920.07,477.02 L920.61,480.28 L921.11,479.13 L921.85,480.25 L922.37,477.97 L923.14,480.32 L923.87,476.91 L924.43,480.31 L925.17,478.49 L925.81,480.22 L926.55,479.86 L927.20,480.09 L927.94,477.90 L928,480.9 L424,480.9 Z" fill="#3a5fd8" fill-opacity="0.3" stroke="none"/>
<path d="M424.00,478.79 L424.70,476.69 L425.49,478.15 L426.08,477.21 L426.59,478.81 L427.15,477.66 L427.61,479.06 L428.07,478.10 L428.54,478.96 L429.33,478.76 L430.05,480.26 L430.55,477.90 L431.28,480.27 L431.79,477.12 L432.48,480.36 L432.95,478.43 L433.43,479.93 L434.10,477.70 L434.85,480.37 L435.60,478.53 L436.24,479.94 L436.79,479.37 L437.32,480.35 L437.83,479.70 L438.39,480.25 L439.10,479.40 L439.62,480.23 L440.07,479.88 L440.78,480.12 L441.29,477.87 L441.78,479.99 L442.38,477.98 L442.97,480.15 L443.66,477.39 L444.40,480.05 L445.08,478.52 L445.54,480.34 L446.02,478.62 L446.53,480.36 L447.27,477.00 L447.82,480.28 L448.37,478.73 L448.98,480.27 L449.76,477.14 L450.30,479.92 L450.86,478.90 L451.44,480.16 L452.07,479.40 L452.52,480.27 L453.00,478.85 L453.46,480.25 L453.99,478.32 L454.70,480.07 L455.40,477.33 L455.97,479.91 L456.47,478.19 L456.94,479.98 L457.70,478.09 L458.43,480.33 L459.07,477.98 L459.80,479.99 L460.45,476.98 L461.14,480.29 L461.61,479.54 L462.09,479.98 L462.74,478.21 L463.43,480.16 L463.88,475.27 L464.51,478.33 L465.22,476.05 L465.93,477.51 L466.72,476.27 L467.41,478.00 L468.08,476.97 L468.79,478.35 L469.25,476.95 L469.94,478.87 L470.57,477.87 L471.33,478.51 L472.11,477.88 L472.90,479.39 L473.42,477.55 L473.92,480.14 L474.71,479.08 L475.33,479.96 L476.03,479.00 L476.65,480.39 L477.10,478.40 L477.66,480.33 L478.23,477.98 L478.68,480.02 L479.42,478.97 L480.12,479.95 L480.67,478.47 L481.47,480.11 L482.05,478.60 L482.52,480.35 L483.26,478.96 L483.80,480.27 L484.42,479.53 L485.21,479.96 L485.94,477.90 L486.72,480.13 L487.42,479.17 L488.03,480.02 L488.71,479.85 L489.48,480.34 L490.10,478.57 L490.81,479.91 L491.35,478.57 L491.99,480.20 L492.50,479.69 L493.27,480.15 L493.79,476.60 L494.40,480.33 L494.92,479.56 L495.40,480.28 L495.94,477.92 L496.65,480.19 L497.25,478.49 L497.82,480.37 L498.36,477.65 L498.99,480.09 L499.74,479.63 L500.28,480.20 L500.89,476.78 L501.64,480.39 L502.10,477.91 L502.72,480.11 L503.17,477.88 L503.91,479.97 L504.70,479.79 L505.20,480.14 L505.89,476.93 L506.57,480.02 L507.18,478.86 L507.90,480.28 L508.67,478.57 L509.17,480.27 L509.84,478.78 L510.31,480.14 L510.97,478.65 L511.63,480.39 L512.18,477.85 L512.86,471.70 L513.48,471.70 L514.26,480.05 L514.82,475.87 L515.42,477.80 L516.19,476.66 L516.79,478.64 L517.52,477.15 L518.31,478.14 L518.84,477.42 L519.62,479.03 L520.15,477.24 L520.65,479.14 L521.44,478.28 L522.03,478.81 L522.74,476.68 L523.25,479.14 L523.71,478.48 L524.28,479.75 L524.83,477.85 L525.32,479.92 L525.84,478.00 L526.58,480.18 L527.05,478.49 L527.82,480.30 L528.40,477.76 L528.99,479.99 L529.71,479.87 L530.18,479.94 L530.72,477.91 L531.29,480.26 L532.07,478.61 L532.77,480.24 L533.32,479.14 L534.09,480.08 L534.87,479.67 L535.49,479.92 L536.27,478.62 L536.87,480.15 L537.65,479.10 L538.36,479.99 L539.08,478.54 L539.64,480.22 L540.36,479.70 L541.08,480.28 L541.55,479.35 L542.11,479.91 L542.87,477.48 L543.35,480.35 L543.97,478.41 L544.51,480.19 L545.17,478.08 L545.92,480.07 L546.41,477.45 L547.06,480.21 L547.77,479.65 L548.31,480.32 L549.06,478.54 L549.65,479.90 L550.28,479.09 L550.96,479.90 L551.45,478.00 L552.19,479.94 L552.65,479.78 L553.17,479.91 L553.82,477.35 L554.58,480.18 L555.12,477.86 L555.61,480.10 L556.27,479.53 L556.77,480.30 L557.31,478.18 L557.83,480.39 L558.40,478.70 L558.96,480.30 L559.68,478.83 L560.17,480.20 L560.81,478.80 L561.32,480.05 L561.91,479.59 L562.70,480.24 L563.35,478.44 L564.10,477.31 L564.62,475.52 L565.38,476.74 L565.97,475.76 L566.43,477.33 L567.20,475.92 L567.82,478.21 L568.46,476.26 L569.19,478.59 L569.68,476.63 L570.15,478.55 L570.92,477.54 L571.64,478.85 L572.39,477.58 L572.98,479.15 L573.47,478.00 L573.94,480.12 L574.65,479.06 L575.14,480.10 L575.79,478.56 L576.38,480.11 L576.98,478.41 L577.59,480.39 L578.25,478.64 L578.97,480.01 L579.58,479.43 L580.07,480.34 L580.67,479.46 L581.30,480.38 L581.97,479.17 L582.69,480.14 L583.16,478.48 L583.94,480.33 L584.69,476.92 L585.43,480.30 L586.22,477.85 L586.99,480.32 L587.72,477.72 L588.29,480.02 L588.80,477.47 L589.53,480.33 L590.16,477.55 L590.70,480.15 L591.26,479.72 L591.77,479.93 L592.46,477.60 L593.18,480.34 L593.82,478.50 L594.57,480.12 L595.22,477.67 L596.02,480.09 L596.61,478.61 L597.41,480.11 L597.98,478.41 L598.49,480.03 L598.96,477.50 L599.64,479.91 L600.29,478.56 L600.74,480.38 L601.24,478.42 L601.87,479.95 L602.37,479.25 L602.83,480.40 L603.40,479.54 L603.93,480.11 L604.59,479.28 L605.20,480.33 L605.98,479.75 L606.46,480.08 L607.22,478.46 L607.76,480.39 L608.44,478.51 L609.11,480.18 L609.89,478.63 L610.66,480.38 L611.29,476.27 L612.02,477.75 L612.79,476.02 L613.42,477.65 L613.93,477.01 L614.69,478.04 L615.15,476.91 L615.86,478.83 L616.34,477.41 L617.06,478.39 L617.75,477.75 L618.48,479.19 L619.16,477.54 L619.61,479.38 L620.32,476.90 L621.08,480.24 L621.61,477.04 L622.31,480.07 L623.10,477.98 L623.79,479.97 L624.40,478.27 L624.95,480.29 L625.62,478.99 L626.12,480.39 L626.61,477.39 L627.11,480.39 L627.57,478.20 L628.27,480.03 L628.74,478.50 L629.48,479.99 L630.24,479.03 L631.01,479.93 L631.50,479.79 L631.96,479.98 L632.69,477.99 L633.36,480.26 L633.85,479.14 L634.37,480.24 L634.97,479.64 L635.52,480.04 L636.10,477.84 L636.72,479.97 L637.39,479.49 L637.99,480.01 L638.56,478.31 L639.09,479.97 L639.57,477.60 L640.02,480.30 L640.74,477.79 L641.36,480.15 L642.09,479.41 L642.66,479.98 L643.20,477.46 L643.73,480.05 L644.35,479.26 L644.83,480.01 L645.52,478.21 L646.10,480.20 L646.69,477.70 L647.45,480.39 L647.97,479.00 L648.59,480.21 L649.35,479.44 L649.99,480.02 L650.70,478.52 L651.27,480.32 L652.01,478.08 L652.52,480.18 L653.24,478.76 L653.85,479.96 L654.39,479.60 L655.08,479.98 L655.59,479.65 L656.15,480.14 L656.66,478.69 L657.45,480.04 L657.93,477.68 L658.52,479.91 L659.25,478.42 L659.77,480.08 L660.25,474.58 L660.84,476.29 L661.47,474.86 L662.13,476.55 L662.90,474.47 L663.49,476.98 L664.25,474.96 L664.94,477.83 L665.50,476.12 L666.22,477.90 L666.76,476.44 L667.36,477.84 L667.87,477.17 L668.49,479.14 L669.13,477.28 L669.76,478.91 L670.40,478.34 L671.08,479.99 L671.71,477.86 L672.23,480.06 L672.82,478.77 L673.61,480.22 L674.08,479.50 L674.54,480.19 L675.14,478.51 L675.68,480.29 L676.39,477.17 L676.91,480.00 L677.50,479.77 L678.22,480.00 L678.90,478.28 L679.42,479.92 L680.00,478.00 L680.73,480.17 L681.29,478.76 L682.03,480.22 L682.78,479.52 L683.31,480.19 L683.83,479.18 L684.38,480.28 L684.93,478.43 L685.61,480.07 L686.18,476.77 L686.65,479.99 L687.42,478.75 L688.16,480.08 L688.62,478.95 L689.30,480.27 L689.78,479.67 L690.50,480.23 L691.01,476.85 L691.52,479.95 L692.18,478.16 L692.94,480.01 L693.69,479.21 L694.32,480.03 L694.92,477.13 L695.47,480.28 L695.97,478.84 L696.58,480.33 L697.20,478.31 L697.95,480.40 L698.70,478.28 L699.38,479.98 L699.96,477.84 L700.44,480.08 L701.11,479.29 L701.80,479.93 L702.37,477.19 L702.99,479.95 L703.45,478.21 L704.02,479.97 L704.59,478.32 L705.31,480.29 L705.92,478.29 L706.66,480.25 L707.39,478.35 L707.94,480.15 L708.73,475.07 L709.29,477.16 L709.96,474.93 L710.72,478.37 L711.28,475.18 L711.94,477.44 L712.71,476.12 L713.40,477.95 L713.93,476.44 L714.41,478.96 L715.14,477.01 L715.87,478.64 L716.41,477.78 L717.01,478.57 L717.48,478.29 L718.22,478.90 L718.82,479.51 L719.48,479.93 L720.27,478.45 L720.76,480.08 L721.28,479.88 L721.74,480.06 L722.23,477.69 L722.98,480.34 L723.44,478.63 L724.15,480.31 L724.61,478.12 L725.36,480.04 L725.84,478.12 L726.45,479.93 L726.99,476.94 L727.45,480.39 L728.12,477.70 L728.68,480.04 L729.19,477.22 L729.66,480.22 L730.31,478.16 L730.81,480.00 L731.39,478.21 L731.99,480.21 L732.71,476.86 L733.36,480.25 L733.83,476.96 L734.57,480.23 L735.23,476.80 L735.89,480.25 L736.49,477.35 L737.18,480.10 L737.95,477.46 L738.40,480.27 L739.00,478.00 L739.76,480.38 L740.50,476.76 L741.15,480.26 L741.90,476.98 L742.67,480.23 L743.15,478.02 L743.67,480.02 L744.44,479.29 L745.13,480.17 L745.65,479.15 L746.38,480.17 L746.86,476.87 L747.39,480.11 L748.15,477.17 L748.77,480.11 L749.29,479.72 L749.98,480.22 L750.63,478.33 L751.13,480.38 L751.93,478.78 L752.60,480.01 L753.11,478.52 L753.74,480.39 L754.20,476.76 L754.82,480.12 L755.36,478.43 L756.14,480.02 L756.88,477.50 L757.34,480.30 L757.86,474.75 L758.61,476.58 L759.38,475.55 L759.87,478.05 L760.52,475.61 L761.11,478.42 L761.90,476.87 L762.44,477.66 L763.20,476.53 L763.90,477.95 L764.37,476.86 L765.06,478.66 L765.77,477.95 L766.27,479.28 L766.80,478.46 L767.50,480.30 L767.96,477.54 L768.74,479.97 L769.50,479.45 L769.98,479.94 L770.73,478.40 L771.30,479.99 L771.92,478.74 L772.44,480.37 L773.14,470.50 L773.90,480.27 L774.49,479.63 L775.24,480.23 L775.74,478.55 L776.51,480.34 L777.30,479.00 L777.99,480.29 L778.60,479.64 L779.12,480.22 L779.92,476.69 L780.41,480.26 L781.17,479.17 L781.72,479.91 L782.18,477.39 L782.68,480.40 L783.42,478.70 L784.02,479.94 L784.55,478.75 L785.06,480.01 L785.76,479.82 L786.24,480.10 L786.86,479.69 L787.53,480.05 L788.26,478.68 L788.73,480.03 L789.33,478.84 L790.06,480.23 L790.81,477.21 L791.26,479.94 L791.88,477.48 L792.39,479.98 L792.97,479.53 L793.63,480.40 L794.26,478.33 L794.75,480.04 L795.49,477.41 L796.19,480.21 L796.90,479.03 L797.69,480.15 L798.31,478.31 L798.77,479.92 L799.30,479.80 L799.84,479.99 L800.30,479.20 L800.82,480.39 L801.48,478.32 L802.17,480.35 L802.93,478.85 L803.42,480.15 L804.05,479.78 L804.64,480.33 L805.29,477.62 L805.94,480.03 L806.45,475.47 L807.05,477.56 L807.64,475.93 L808.17,477.92 L808.97,475.78 L809.71,478.10 L810.50,476.77 L811.17,478.37 L811.64,477.53 L812.14,478.30 L812.92,477.19 L813.68,478.77 L814.22,477.93 L815.00,479.34 L815.63,477.85 L816.18,480.08 L816.68,477.85 L817.31,480.27 L817.92,478.74 L818.41,480.33 L818.97,478.58 L819.50,480.36 L820.14,477.07 L820.79,480.07 L821.31,478.39 L821.95,480.09 L822.57,478.63 L823.10,480.14 L823.68,478.89 L824.25,479.97 L824.79,478.36 L825.34,479.91 L825.89,478.73 L826.36,479.96 L826.97,479.51 L827.57,480.03 L828.06,478.94 L828.77,480.32 L829.34,478.16 L830.00,479.98 L830.74,478.09 L831.45,480.02 L832.07,478.12 L832.84,480.34 L833.59,479.13 L834.25,480.15 L835.03,478.44 L835.76,479.96 L836.42,478.40 L837.03,480.04 L837.58,478.29 L838.17,480.24 L838.89,477.20 L839.50,480.31 L840.05,479.32 L840.71,480.36 L841.48,477.97 L842.22,479.92 L842.74,477.90 L843.20,480.38 L843.85,477.89 L844.57,480.13 L845.37,478.33 L846.06,480.21 L846.63,478.51 L847.41,480.06 L848.05,479.53 L848.64,480.12 L849.29,476.64 L849.91,480.18 L850.58,477.39 L851.21,479.99 L851.72,477.82 L852.46,480.14 L852.95,476.97 L853.69,476.57 L854.28,475.17 L854.91,478.10 L855.58,475.00 L856.25,477.97 L856.98,476.78 L857.54,477.99 L858.22,476.59 L858.76,478.33 L859.56,477.49 L860.07,479.06 L860.55,477.24 L861.22,479.28 L861.67,477.77 L862.25,479.28 L862.73,477.10 L863.34,480.21 L863.81,477.10 L864.59,480.18 L865.26,479.86 L866.04,479.97 L866.60,476.82 L867.15,480.10 L867.94,477.86 L868.47,480.21 L869.17,479.59 L869.93,480.16 L870.66,479.73 L871.23,480.31 L872.02,479.34 L872.51,480.13 L873.10,478.83 L873.59,479.99 L874.17,479.71 L874.71,480.28 L875.18,478.52 L875.68,480.05 L876.16,479.06 L876.66,480.18 L877.40,477.61 L877.97,480.04 L878.56,477.55 L879.34,480.15 L879.87,478.76 L880.57,480.27 L881.33,478.50 L881.87,480.10 L882.39,477.65 L883.02,480.13 L883.57,478.48 L884.25,480.12 L884.80,478.81 L885.32,479.97 L885.88,478.78 L886.53,480.22 L887.15,479.83 L887.71,480.29 L888.20,478.59 L888.80,479.95 L889.52,476.77 L890.01,480.26 L890.47,478.17 L891.05,480.19 L891.73,478.63 L892.47,480.22 L893.14,479.78 L893.91,480.03 L894.61,479.86 L895.12,480.30 L895.67,478.86 L896.23,480.08 L896.75,477.12 L897.45,480.27 L898.05,478.52 L898.50,479.98 L899.22,479.86 L899.97,480.10 L900.44,479.79 L901.16,480.29 L901.93,478.81 L902.63,476.82 L903.37,474.56 L903.97,477.24 L904.67,475.76 L905.14,477.93 L905.77,475.79 L906.24,477.61 L906.78,476.33 L907.42,478.85 L908.00,477.12 L908.49,478.33 L909.03,477.36 L909.80,478.99 L910.56,478.00 L911.30,478.91 L911.81,478.24 L912.53,479.98 L913.02,479.54 L913.54,480.37 L914.09,479.20 L914.69,480.34 L915.26,478.50 L915.77,480.36 L916.22,476.90 L916.70,480.04 L917.49,478.78 L918.11,480.18 L918.63,478.89 L919.40,480.08 L920.07,477.02 L920.61,480.28 L921.11,479.13 L921.85,480.25 L922.37,477.97 L923.14,480.32 L923.87,476.91 L924.43,480.31 L925.17,478.49 L925.81,480.22 L926.55,479.86 L927.20,480.09 L927.94,477.90" fill="none" stroke="#3a5fd8" stroke-width="0.95"/>
<path d="M424.00,342.34 L426.00,342.44 L428.00,343.14 L430.15,342.12 L432.30,342.00 L433.10,342.50 L433.40,481.50 L434.40,481.50 L434.80,392.00 L436.40,358.03 L438.15,356.48 L439.90,354.80 L441.67,354.46 L443.45,353.28 L445.23,352.89 L447.00,351.81 L448.60,351.25 L450.20,350.97 L451.80,350.75 L453.40,349.54 L455.00,349.05 L456.58,349.21 L458.17,349.30 L459.75,348.77 L461.33,348.41 L462.92,348.73 L464.50,347.69 L466.55,346.87 L468.60,344.81 L470.65,344.33 L472.70,343.96 L474.45,344.58 L476.20,345.48 L477.95,344.06 L479.70,343.57 L481.34,343.63 L482.98,343.39 L484.62,343.54 L486.26,343.11 L487.90,343.50 L489.10,344.00 L489.30,376.30 L490.20,362.00 L490.80,360.00 L491.60,361.00 L492.30,481.50 L493.20,481.50 L494.00,375.00 L494.40,360.60 L496.27,359.40 L498.13,358.50 L500.00,356.93 L501.67,356.00 L503.33,355.41 L505.00,354.46 L506.67,353.49 L508.33,353.10 L510.00,352.18 L511.60,350.87 L513.20,350.27 L514.80,349.32 L516.40,348.74 L518.00,347.50 L520.00,349.00 L522.00,346.21 L524.00,345.31 L526.00,345.43 L527.75,344.53 L529.50,344.68 L531.25,344.86 L533.00,344.50 L533.20,387.50 L534.20,361.00 L535.30,360.00 L536.00,368.00 L537.00,360.69 L538.60,359.99 L540.20,358.59 L541.80,358.15 L543.40,357.24 L545.00,357.27 L546.67,355.67 L548.33,354.50 L550.00,354.18 L551.67,353.42 L553.33,352.74 L555.00,351.96 L556.50,351.91 L558.00,351.60 L559.50,350.78 L561.00,350.55 L562.50,350.00 L565.00,346.10 L566.67,346.18 L568.33,345.63 L570.00,345.44 L571.50,345.29 L573.00,344.81 L574.50,344.90 L576.00,345.15 L577.50,344.57 L579.00,344.97 L580.50,344.70 L582.00,344.66 L583.50,344.60 L585.00,345.24 L586.50,344.62 L588.00,344.67 L589.50,345.78 L591.00,345.70 L592.50,344.37 L594.00,344.65 L595.50,344.69 L597.00,344.95 L598.50,344.84 L600.00,344.83 L601.54,344.26 L603.08,344.35 L604.62,344.26 L606.15,344.69 L607.69,344.72 L609.23,343.96 L610.77,343.94 L612.31,343.95 L613.85,343.91 L615.38,344.10 L616.92,344.16 L618.46,343.82 L620.00,343.55 L621.50,344.21 L623.00,346.63 L624.50,344.59 L626.00,344.91 L627.50,344.61 L629.00,344.53 L630.50,346.62 L632.00,344.55 L633.50,343.79 L635.00,344.48 L636.50,344.31 L638.00,344.34 L639.50,344.21 L641.00,343.78 L642.50,343.72 L644.00,343.39 L645.50,343.81 L647.00,343.23 L648.50,343.17 L650.00,343.24 L651.52,343.18 L653.03,343.33 L654.55,343.05 L656.06,342.99 L657.58,343.11 L659.09,343.05 L660.61,343.27 L662.12,342.95 L663.64,343.70 L665.15,344.00 L666.67,346.15 L668.18,343.10 L669.70,343.17 L671.21,343.17 L672.73,342.93 L674.24,343.57 L675.76,343.69 L677.27,343.20 L678.79,343.20 L680.30,342.82 L681.82,342.82 L683.33,343.03 L684.85,342.94 L686.36,343.43 L687.88,342.82 L689.39,342.68 L690.91,345.19 L692.42,343.30 L693.94,342.74 L695.45,343.08 L696.97,342.60 L698.48,343.04 L700.00,343.43 L701.54,343.31 L703.08,343.14 L704.62,342.73 L706.15,342.80 L707.69,342.88 L709.23,344.41 L710.77,342.89 L712.31,343.10 L713.85,342.67 L715.38,342.56 L716.92,343.07 L718.46,343.21 L720.00,343.07 L721.54,343.01 L723.08,343.00 L724.62,342.91 L726.15,342.43 L727.69,342.67 L729.23,342.50 L730.77,342.19 L732.31,342.17 L733.85,343.44 L735.38,343.15 L736.92,342.71 L738.46,342.93 L740.00,342.45 L741.54,342.85 L743.08,342.86 L744.62,342.79 L746.15,342.22 L747.69,342.06 L749.23,342.02 L750.77,341.96 L752.31,341.93 L753.85,342.27 L755.38,342.48 L756.92,342.38 L758.46,342.02 L760.00,342.14 L761.54,342.23 L763.08,341.55 L764.62,342.03 L766.15,342.45 L767.69,343.38 L769.23,341.99 L770.77,341.71 L772.31,341.40 L773.85,341.91 L775.38,341.46 L776.92,341.85 L778.46,341.96 L780.00,341.41 L781.54,341.39 L783.08,341.86 L784.62,341.64 L786.15,341.13 L787.69,341.07 L789.23,341.07 L790.77,341.73 L792.31,341.62 L793.85,341.01 L795.38,341.60 L796.92,341.72 L798.46,341.41 L800.00,341.12 L801.54,341.27 L803.08,340.88 L804.62,340.76 L806.15,341.60 L807.69,341.29 L809.23,341.16 L810.77,341.51 L812.31,341.89 L813.85,342.12 L815.38,341.35 L816.92,340.78 L818.46,340.80 L820.00,340.81 L821.52,340.74 L823.05,341.03 L824.57,340.71 L826.10,340.83 L827.62,340.55 L829.14,341.23 L830.67,340.70 L832.19,340.77 L833.71,340.86 L835.24,341.13 L836.76,340.67 L838.29,341.09 L839.81,340.69 L841.33,340.70 L842.86,340.66 L844.38,340.19 L845.90,340.54 L847.43,340.29 L848.95,340.10 L850.48,340.79 L852.00,340.21 L853.57,340.48 L855.14,340.70 L856.71,340.55 L858.29,340.34 L859.86,340.52 L861.43,340.55 L863.00,340.50 L863.20,384.00 L863.80,380.00 L864.40,374.80 L866.40,359.46 L868.02,356.91 L869.63,355.39 L871.25,353.17 L872.93,352.50 L874.61,352.25 L876.29,351.31 L877.96,350.66 L879.64,350.13 L881.32,349.57 L883.00,348.45 L884.50,348.48 L886.00,348.25 L887.50,348.14 L889.00,348.17 L890.50,347.83 L892.00,347.78 L893.50,347.61 L895.00,347.90 L896.83,347.68 L898.67,347.84 L900.50,347.50 L903.00,344.90 L905.20,343.63 L907.40,343.25 L909.10,343.85 L910.80,344.01 L912.50,343.62 L914.20,343.86 L916.13,343.75 L918.07,343.02 L920.00,342.77 L921.73,342.52 L923.45,342.95 L925.17,342.96 L926.90,342.60 L928.00,342.60" fill="none" stroke="#ed998c" stroke-width="1.2"/>
<path d="M863.1,292 V481.5" stroke="#c3b3e2" stroke-width="1.3"/><path d="M863.1,376 V481.5" stroke="#9480cf" stroke-width="0.8"/>
<rect x="852.7" y="295.2" width="10.3" height="62.5" fill="#7a6bd6"/>
<text transform="translate(860.6,355.5) rotate(-90)" font-family="Liberation Sans" font-size="6.6" fill="#fff">Deployment (main)</text>
<circle cx="858" cy="280.4" r="4" fill="none" stroke="#a9adb5" stroke-width="1.1"/><path d="M855.8,280.4 H860.2 M858,278.2 V282.6" stroke="#a9adb5" stroke-width="1.1"/>
<circle cx="870" cy="280.4" r="4" fill="none" stroke="#a9adb5" stroke-width="1.1"/><path d="M867.8,280.4 H872.2" stroke="#a9adb5" stroke-width="1.1"/>
<circle cx="882.7" cy="279.6" r="2.9" fill="none" stroke="#6e9be6" stroke-width="1.1"/><path d="M881.4,279.6 H884" stroke="#8fb0ea" stroke-width="0.8"/><path d="M884.8,281.8 L887.6,284.4" stroke="#4f7fe0" stroke-width="1.2"/>
<path d="M894.5,280 L894.5,277.5 Q895,276 897,276 L899,276 Q901,276.2 901,278 L901,280 Z" fill="#a9adb5"/><path d="M894.5,280 L901,280 L901,283.5 Q900.8,284.8 899.5,284.8 L896,284.8 Q895,284.6 894,283 L892,281.2 Q892.8,280.4 894.5,281.5 Z" fill="#f3f4f6" stroke="#c9ccd2" stroke-width="0.6"/>
<path d="M906.6,280.8 L911.4,276.4 L916.2,280.8 L914.6,280.8 L914.6,284.8 L912.5,284.8 L912.5,282 L910.3,282 L910.3,284.8 L908.2,284.8 L908.2,280.8 Z" fill="#6b7280"/>
<path d="M918.9,278 H928 M918.9,280.6 H928 M918.9,283.4 H928" stroke="#a9adb5" stroke-width="1.2"/>
</svg>
<div class="ylab" style="right:606.50px;top:479.23px;font-size:6.5px;">0.00</div>
<div class="ylab" style="right:606.50px;top:460.26px;font-size:6.5px;">10.00</div>
<div class="ylab" style="right:606.50px;top:441.28px;font-size:6.5px;">20.00</div>
<div class="ylab" style="right:606.50px;top:422.31px;font-size:6.5px;">30.00</div>
<div class="ylab" style="right:606.50px;top:403.33px;font-size:6.5px;">40.00</div>
<div class="ylab" style="right:606.50px;top:384.36px;font-size:6.5px;">50.00</div>
<div class="ylab" style="right:606.50px;top:365.38px;font-size:6.5px;">60.00</div>
<div class="ylab" style="right:606.50px;top:346.41px;font-size:6.5px;">70.00</div>
<div class="ylab" style="right:606.50px;top:327.43px;font-size:6.5px;">80.00</div>
<div class="ylab" style="right:606.50px;top:308.46px;font-size:6.5px;">90.00</div>
<div class="ylab" style="right:606.50px;top:289.48px;font-size:6.5px;">100.00</div>
<div class="t" style="left:388.8px;top:384px;font-size:6.6px;color:#858a94;font-weight:bold;transform:translate(-50%,-50%) rotate(-90deg)">Usage (%)</div>
<div class="xlab" style="left:462.0px;top:490.18px;transform:translateX(-50%)">Oct 14</div>
<div class="xlab" style="left:510.5px;top:490.18px;transform:translateX(-50%)">Oct 15</div>
<div class="xlab" style="left:559.0px;top:490.18px;transform:translateX(-50%)">Oct 16</div>
<div class="xlab" style="left:607.5px;top:490.18px;transform:translateX(-50%)">Oct 17</div>
<div class="xlab" style="left:656.0px;top:490.18px;transform:translateX(-50%)">Oct 18</div>
<div class="xlab" style="left:704.5px;top:490.18px;transform:translateX(-50%)">Oct 19</div>
<div class="xlab" style="left:753.0px;top:490.18px;transform:translateX(-50%)">Oct 20</div>
<div class="xlab" style="left:801.5px;top:490.18px;transform:translateX(-50%)">Oct 21</div>
<div class="xlab" style="left:850.0px;top:490.18px;transform:translateX(-50%)">Oct 22</div>
<div class="xlab" style="left:898.5px;top:490.18px;transform:translateX(-50%)">Oct 23</div>
<div class="dot" style="left:584.3px;top:503.2px;width:8.2px;height:8.2px;background:#3b5cd6;box-shadow:inset 0 0 0 1.5px #3b5cd6"></div>
<div class="leg" style="left:594.4px;top:504.61px;font-size:7.35px;">CPU</div>
<div class="dot" style="left:616.1999999999999px;top:503.2px;width:8.2px;height:8.2px;background:#e97867;box-shadow:inset 0 0 0 1.5px #f3a494"></div>
<div class="leg" style="left:626px;top:504.61px;font-size:7.35px;">RAM</div>
<div class="dot" style="left:647.9px;top:503.2px;width:8.2px;height:8.2px;background:#d9644f;box-shadow:inset 0 0 0 1.5px #e6a85a"></div>
<div class="leg" style="left:657.5px;top:504.61px;font-size:7.35px;">Disk</div>
<div class="dot" style="left:678.4px;top:503.2px;width:8.2px;height:8.2px;background:#459e7a;box-shadow:inset 0 0 0 1.5px #459e7a"></div>
<div class="leg" style="left:688.5px;top:504.61px;font-size:7.35px;">Load average</div>
</body></html>
